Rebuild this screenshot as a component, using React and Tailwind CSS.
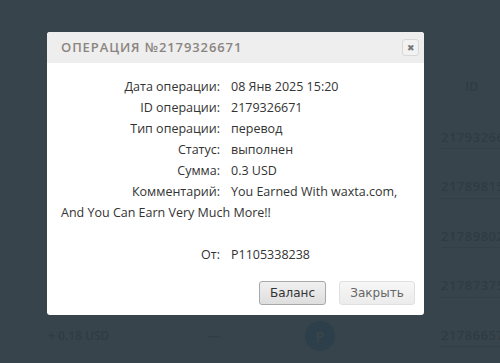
import React from 'react';

const rows = [
    { label: 'Дата операции:', value: '08 Янв 2025 15:20' },
    { label: 'ID операции:', value: '2179326671' },
    { label: 'Тип операции:', value: 'перевод' },
    { label: 'Статус:', value: 'выполнен' },
    { label: 'Сумма:', value: '0.3 USD' },
    { label: 'Комментарий:', value: 'You Earned With waxta.com,' },
];

const ids = ['2179326671', '2178981597', '2178980281', '2178737591', '2178665723'];

const App = () => {
    return (
        <div className="relative w-[500px] h-[363px] overflow-hidden bg-[#37444b]" style={{ fontFamily: '"Open Sans", sans-serif' }}>
            {/* page behind the overlay */}
            <div className="flex flex-col pt-[78px] text-[#2f3c42] font-semibold text-[12px]">
                <div className="h-[36px] flex justify-end pr-[22px]">ID</div>
                {ids.map((id, i) => (
                    <div key={id} className="h-[49.4px] flex items-center">
                        <div className="w-[48px] shrink-0" />
                        <div className="w-[160px] shrink-0">{i === 4 ? '+ 0.18 USD' : ''}</div>
                        <div className="w-[97px] shrink-0">{i === 4 ? '—' : ''}</div>
                        <div className="w-[136px] shrink-0">
                            {i === 4 && (
                                <div className="w-[30px] h-[30px] rounded-full bg-[#2d3f4a] flex items-center justify-center text-[#37444b] text-[15px] font-bold">P</div>
                            )}
                        </div>
                        <div className="shrink-0 whitespace-nowrap border-b border-[#333f45] pb-[1px] text-[13px] tracking-[0.5px]">{id}</div>
                    </div>
                ))}
            </div>

            {/* modal */}
            <div className="absolute left-[47px] top-[32px] w-[377px] h-[283px] bg-white rounded-[3px] overflow-hidden flex flex-col">
                <div className="h-[31px] bg-[#eeeeee] flex items-center justify-between pl-[14px] pr-[5px]">
                    <span className="text-[13px] font-semibold tracking-[0.9px] text-[#8b8581]">ОПЕРАЦИЯ №2179326671</span>
                    <div className="w-[17px] h-[17px] border border-[#d8d8d8] rounded-[3px] bg-[#f2f2f2] flex items-center justify-center text-[9px] text-[#777]">✖</div>
                </div>
                <div className="flex flex-col pt-[13px] px-[14px] text-[12.5px] text-[#333] leading-[21px]">
                    {rows.map(r => (
                        <div key={r.label} className="flex">
                            <div className="w-[159px] text-right">{r.label}</div>
                            <div className="ml-[11px]">{r.value}</div>
                        </div>
                    ))}
                    <div>And You Can Earn Very Much More!!</div>
                    <div className="h-[21px]" />
                    <div className="flex">
                        <div className="w-[159px] text-right">От:</div>
                        <div className="ml-[11px]">P1105338238</div>
                    </div>
                </div>
                <div className="flex justify-end gap-[13px] pr-[9px] mt-auto mb-[10px]" style={{ fontFamily: '"DejaVu Sans", sans-serif' }}>
                    <button className="w-[67px] h-[24px] rounded-[3px] border border-[#a8a8a8] bg-gradient-to-b from-[#f0f0f0] to-[#dedede] text-[12px] text-[#333]">Баланс</button>
                    <button className="w-[76px] h-[24px] rounded-[3px] border border-[#e0e0e0] bg-gradient-to-b from-[#f7f7f7] to-[#ececec] text-[12px] text-[#666]">Закрыть</button>
                </div>
            </div>
        </div>
    );
};

export default App;
